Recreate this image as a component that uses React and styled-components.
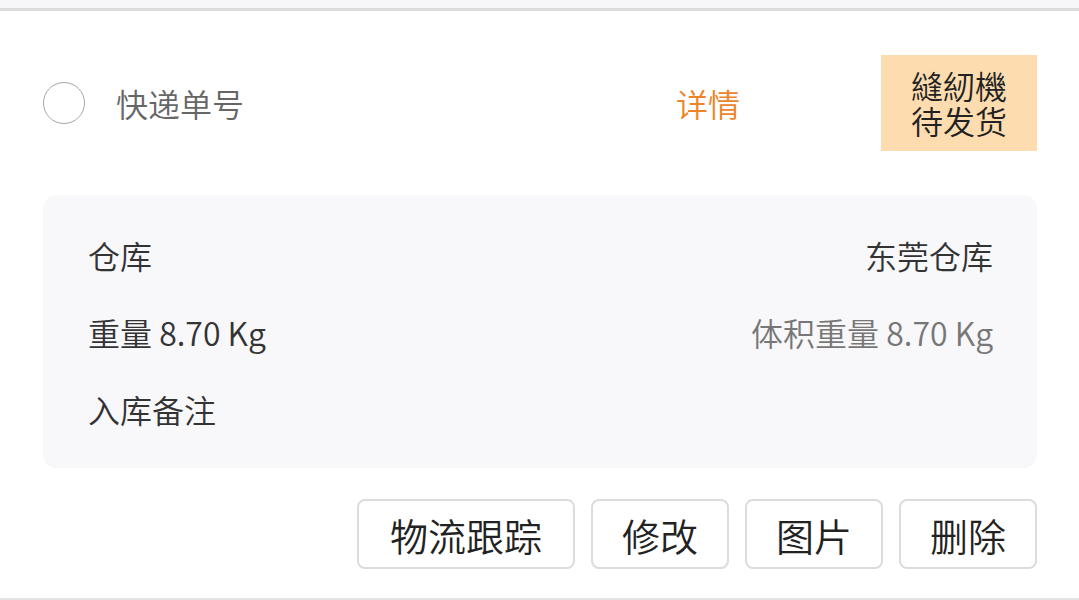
import React from 'react'
import styled, { createGlobalStyle } from 'styled-components'

const GlobalStyle = createGlobalStyle`
    html, body {
        margin: 0;
        padding: 0;
        background: #fff;
        font-family: "Noto Sans CJK SC", "Noto Sans", sans-serif;
        font-weight: 350;
    }
`

const Page = styled.div`
    width: 1079px;
    height: 600px;
    overflow: hidden;
    display: flex;
    flex-direction: column;
    background: #fff;
`

const TopBand = styled.div`
    height: 8px;
    background: #f7f6f9;
    border-bottom: 3px solid #dcdcdc;
`

const Card = styled.div`
    flex: 1;
    display: flex;
    flex-direction: column;
    padding: 0 42px 0 43px;
    border-bottom: 2px solid #e3e3e3;
`

const Header = styled.div`
    display: flex;
    align-items: center;
    margin-top: 44px;
    height: 96px;
`

const Check = styled.span`
    width: 40px;
    height: 40px;
    border: 1.5px solid #a8a8a8;
    border-radius: 50%;
    flex-shrink: 0;
`

const Label = styled.span`
    margin-left: 31px;
    font-size: 32px;
    color: #666;
    flex: 1;
`

const Detail = styled.span`
    font-size: 32px;
    color: #ec8529;
    margin-right: 141px;
`

const Badge = styled.div`
    width: 156px;
    height: 96px;
    background: #fddcb0;
    color: #222;
    font-size: 32px;
    display: flex;
    flex-direction: column;
    align-items: center;
    justify-content: center;

    span {
        line-height: 35px;
    }
`

const Panel = styled.div`
    margin-top: 44px;
    background: #f8f7fa;
    border-radius: 14px;
    padding: 21px 44px 21px 45px;
`

const Row = styled.div`
    height: 77px;
    display: flex;
    align-items: center;
    justify-content: space-between;
    font-size: 32px;
    color: #333;
`

const Muted = styled.span`
    color: ${props => props.color || '#777'};
`

const Actions = styled.div`
    margin-top: 31px;
    display: flex;
    justify-content: flex-end;
    gap: 16px;
`

const Button = styled.button`
    height: 70px;
    padding: 0 ${props => props.pad || 29}px;
    background: #fff;
    border: 2px solid #dcdcdc;
    border-radius: 8px;
    font-family: inherit;
    font-weight: 350;
    font-size: 38px;
    color: #222;
    cursor: pointer;
`

const App = () => (
    <Page>
        <GlobalStyle />
        <TopBand />
        <Card>
            <Header>
                <Check />
                <Label>快递单号</Label>
                <Detail>详情</Detail>
                <Badge>
                    <span>縫紉機</span>
                    <span>待发货</span>
                </Badge>
            </Header>

            <Panel>
                <Row>
                    <span>仓库</span>
                    <span>东莞仓库</span>
                </Row>
                <Row>
                    <span>重量 8.70 Kg</span>
                    <Muted>体积重量 8.70 Kg</Muted>
                </Row>
                <Row>
                    <span>入库备注</span>
                </Row>
            </Panel>

            <Actions>
                <Button pad={31}>物流跟踪</Button>
                <Button>修改</Button>
                <Button>图片</Button>
                <Button>删除</Button>
            </Actions>
        </Card>
    </Page>
)

export default App
